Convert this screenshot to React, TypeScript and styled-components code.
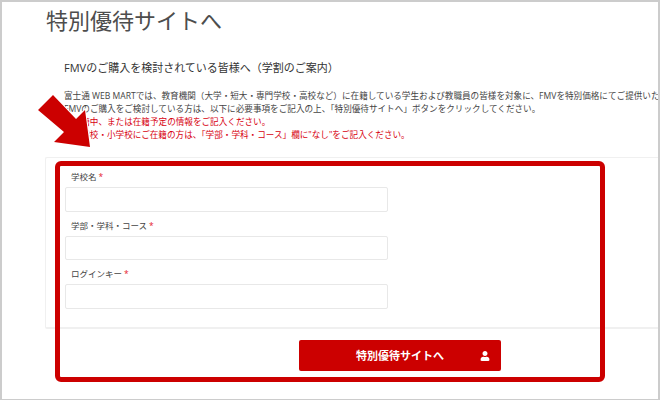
import styled, { createGlobalStyle } from 'styled-components';
import { FaUser } from 'react-icons/fa';

const GlobalStyle = createGlobalStyle`
  html, body {
    margin: 0;
    padding: 0;
    background: #fff;
  }
  body {
    font-family: "Open Sans", "Noto Sans CJK JP", sans-serif;
  }
`;

const Page = styled.div`
  position: relative;
  box-sizing: border-box;
  width: 660px;
  height: 400px;
  border: 2px solid #ccc;
  border-bottom-width: 1px;
  overflow: hidden;
  padding: 3px 0 0 44px;
  background: #fff;
`;

const Title = styled.h1`
  margin: 0;
  font-size: 22px;
  line-height: 30px;
  font-weight: 400;
  color: #4d4d4d;
  white-space: nowrap;
`;

const Lead = styled.div`
  margin: 25px 0 0 18px;
  font-size: 11px;
  line-height: 16px;
  color: #333;
  white-space: nowrap;
`;

const Notes = styled.div`
  margin: 14px 0 0 18px;
  font-size: 8.6px;
  line-height: 13px;
  white-space: nowrap;
`;

const NoteLine = styled.div<{ $alert?: boolean }>`
  height: 13px;
  color: ${(p) => (p.$alert ? '#d7000f' : '#444')};
`;

const Panel = styled.div`
  box-sizing: border-box;
  height: 172px;
  margin: 15px 0 0 -1px;
  padding: 11px 0 0 19px;
  border: 1px solid #f0f0f0;
  border-right: none;
  border-bottom-width: 2px;
  border-radius: 2px 0 0 2px;
`;

const Field = styled.div`
  margin-bottom: 6px;
`;

const Label = styled.label`
  display: block;
  margin-left: 6px;
  font-size: 8.5px;
  line-height: 16px;
  height: 18px;
  color: #444;
`;

const Required = styled.span`
  margin-left: 2px;
  color: #e5202e;
`;

const Input = styled.input`
  display: block;
  box-sizing: border-box;
  width: 323px;
  height: 24.5px;
  border: 1px solid #e8e8e8;
  border-radius: 2px;
  background: #fff;
  outline: none;
`;

const Actions = styled.div`
  display: flex;
  margin: 11px 0 0 253px;
`;

const SubmitButton = styled.button`
  display: flex;
  align-items: center;
  box-sizing: border-box;
  position: relative;
  justify-content: center;
  width: 202px;
  height: 31px;
  padding: 0 0 2px;
  border: none;
  border-radius: 2px;
  background: #cc0000;
  color: #fff;
  font-family: inherit;
  font-size: 11px;
  font-weight: 700;
  svg {
    position: absolute;
    right: 11px;
    top: 11px;
  }
`;

const Frame = styled.div`
  position: absolute;
  left: 53px;
  top: 159px;
  box-sizing: border-box;
  width: 550px;
  height: 221px;
  border: 5px solid #cc0000;
  border-radius: 6px;
  pointer-events: none;
`;

const Arrow = styled.svg`
  position: absolute;
  left: 30px;
  top: 88px;
`;

const fields = ['学校名', '学部・学科・コース', 'ログインキー'];

const App = () => {
  return (
    <Page>
      <GlobalStyle />
      <Title>特別優待サイトへ</Title>
      <Lead>FMVのご購入を検討されている皆様へ（学割のご案内）</Lead>
      <Notes>
        <NoteLine>
          富士通 WEB MARTでは、教育機関（大学・短大・専門学校・高校など）に在籍している学生および教職員の皆様を対象に、FMVを特別価格にてご提供いたしております。
        </NoteLine>
        <NoteLine>
          FMVのご購入をご検討している方は、以下に必要事項をご記入の上、「特別優待サイトへ」ボタンをクリックしてください。
        </NoteLine>
        <NoteLine $alert>※在籍中、または在籍予定の情報をご記入ください。</NoteLine>
        <NoteLine $alert>
          ※中学校・小学校にご在籍の方は、「学部・学科・コース」欄に"なし"をご記入ください。
        </NoteLine>
      </Notes>
      <Panel>
        {fields.map((name) => (
          <Field key={name}>
            <Label>
              {name}
              <Required>*</Required>
            </Label>
            <Input />
          </Field>
        ))}
      </Panel>
      <Actions>
        <SubmitButton>
          特別優待サイトへ
          <FaUser size={10} />
        </SubmitButton>
      </Actions>
      <Frame />
      <Arrow width="70" height="64" viewBox="0 0 70 64">
        <path
          d="M21 5 L44 29 L53 20 L58 57 L22 52 L32 42 L6 20 Z"
          fill="#cc0000"
          stroke="#fff"
          strokeWidth="2"
          paintOrder="stroke"
        />
      </Arrow>
    </Page>
  );
};

export default App;
